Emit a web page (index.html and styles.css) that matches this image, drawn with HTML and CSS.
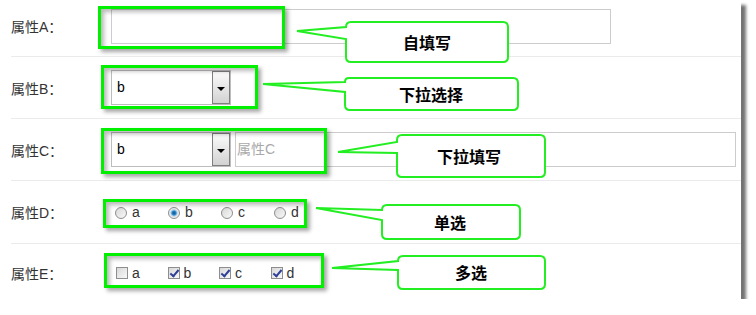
FILE: index.html
```html
<!DOCTYPE html>
<html lang="zh-CN">
<head>
    <meta charset="UTF-8">
    <meta name="viewport" content="width=device-width, initial-scale=1.0">
    <title>属性填写方式</title>
    <link rel="stylesheet" href="styles.css">
</head>
<body>

<div class="panel">
    <div class="row row-first">
        <span class="label">属性A：</span>
        <input class="text-input" type="text">
    </div>

    <div class="row">
        <span class="label">属性B：</span>
        <div class="select">
            <span class="select-value">b</span>
            <span class="select-btn"></span>
        </div>
    </div>

    <div class="row">
        <span class="label">属性C：</span>
        <div class="select">
            <span class="select-value">b</span>
            <span class="select-btn"></span>
        </div>
        <input class="text-input text-input-side" type="text" placeholder="属性C">
    </div>

    <div class="row row-radio">
        <span class="label">属性D：</span>
        <div class="options">
            <label class="option"><input type="radio" name="d">a</label>
            <label class="option"><input type="radio" name="d" checked>b</label>
            <label class="option"><input type="radio" name="d">c</label>
            <label class="option"><input type="radio" name="d">d</label>
        </div>
    </div>

    <div class="row row-last">
        <span class="label">属性E：</span>
        <div class="options options-check">
            <label class="option"><input type="checkbox">a</label>
            <label class="option"><input type="checkbox" checked>b</label>
            <label class="option"><input type="checkbox" checked>c</label>
            <label class="option"><input type="checkbox" checked>d</label>
        </div>
    </div>

    <!-- annotations drawn over the form -->
    <div class="mark mark-a"></div>
    <div class="mark mark-b"></div>
    <div class="mark mark-c"></div>
    <div class="mark mark-d"></div>
    <div class="mark mark-e"></div>

    <svg class="callouts" width="756" height="315" viewBox="0 0 756 315">
        <path d="M351,22 H503 Q508,22 508,27 V57 Q508,62 503,62 H351 Q346,62 346,57 V39 L297,31 L346,27 Q346,22 351,22 Z"/>
        <text x="427" y="42">自填写</text>

        <path d="M349,78 H513 Q518,78 518,83 V105 Q518,110 513,110 H350 Q345,110 345,105 V92 L263,84 L345,82 Q345,78 349,78 Z"/>
        <text x="431" y="94">下拉选择</text>

        <path d="M402,135 H540 Q545,135 545,140 V172 Q545,177 540,177 H402 Q397,177 397,172 V153 L338,152 L397,142 V140 Q397,135 402,135 Z"/>
        <text x="469" y="156">下拉填写</text>

        <path d="M387,205 H515 Q520,205 520,210 V234 Q520,239 515,239 H387 Q382,239 382,234 V220 L316,208 L382,210 Q382,205 387,205 Z"/>
        <text x="450" y="222">单选</text>

        <path d="M403,256 H540 Q545,256 545,261 V284 Q545,289 540,289 H403 Q398,289 398,284 V270 L332,268 L398,261 Q398,256 403,256 Z"/>
        <text x="471" y="272">多选</text>
    </svg>
</div>

</body>
</html>
```

FILE: styles.css
```css
body {
    margin: 0;
    background-color: #ffffff;
    font-family: "Liberation Sans", Arial, "Noto Sans CJK SC", sans-serif;
    font-size: 14px;
    color: #333333;
}
.panel {
    position: relative;
    width: 741px;
    height: 299px;
    background-color: #ffffff;
    box-shadow: 5px 5px 3px rgba(0, 0, 0, 0.55);
}
.row {
    box-sizing: border-box;
    display: flex;
    align-items: center;
    height: 62px;
    margin-left: 11px;
    border-bottom: 1px solid #ebebeb;
}
.row-first {
    height: 57px;
    padding-bottom: 4px;
}
.row-radio {
    height: 63px;
}
.row-last {
    height: 55px;
    padding-top: 3px;
    border-bottom: none;
}
.label {
    width: 100px;
    flex-shrink: 0;
    color: #333333;
}
.text-input {
    box-sizing: border-box;
    width: 500px;
    height: 35px;
    margin: 0;
    padding: 0 5px;
    border: 1px solid #cccccc;
    font-family: inherit;
    font-size: 14px;
    outline: none;
}
.text-input-side {
    width: 501px;
    height: 35px;
    margin-left: 4px;
    margin-top: -1px;
    padding: 0 1px;
}
.text-input::placeholder {
    color: #a9a9a9;
}
.select {
    box-sizing: border-box;
    display: flex;
    width: 120px;
    height: 35px;
    border: 1px solid #bdbdbd;
    background-color: #ffffff;
}
.select-value {
    flex: 1;
    padding-left: 5px;
    line-height: 33px;
    color: #000000;
}
.select-btn {
    box-sizing: border-box;
    position: relative;
    width: 18px;
    height: 33px;
    border: 1px solid #7f7f7f;
    background: linear-gradient(#fbfbfb, #d2d2d2);
}
.select-btn::after {
    content: "";
    position: absolute;
    left: 4px;
    top: 15px;
    border-left: 4px solid transparent;
    border-right: 4px solid transparent;
    border-top: 4px solid #000000;
}
.options {
    display: flex;
    padding-left: 4px;
}
.option {
    display: flex;
    align-items: center;
    width: 53px;
    color: #333333;
}
.options-check {
    padding-left: 5px;
}
.options-check .option {
    width: 51.5px;
}
.option input {
    appearance: none;
    -webkit-appearance: none;
    box-sizing: border-box;
    position: relative;
    width: 12px;
    height: 12px;
    margin: 0 5px 0 0;
    border: 1px solid #8e8e8e;
    background: linear-gradient(135deg, #d8d8d8, #f8f8f8);
}
.option input[type="radio"] {
    border-radius: 50%;
    margin-top: 2px;
}
.option input[type="radio"]:checked {
    background: radial-gradient(circle, #0c4f86 0, #2b88c8 2px, #9cc8e8 3px, #e8e8e8 4px, #f8f8f8 6px);
}
.option input[type="checkbox"] {
    margin-right: 4px;
    margin-top: -1px;
}
.option input[type="checkbox"]:checked::after {
    content: "";
    position: absolute;
    left: 3px;
    top: 0;
    width: 3px;
    height: 7px;
    border-right: 2px solid #2d3f96;
    border-bottom: 2px solid #2d3f96;
    transform: rotate(40deg);
}
.mark {
    position: absolute;
    box-sizing: border-box;
    border: 3px solid #00f000;
    box-shadow: 3px 3px 4px rgba(0, 0, 0, 0.35), inset 3px 3px 4px rgba(0, 0, 0, 0.28);
}
.mark-a {
    left: 98px;
    top: 6px;
    width: 187px;
    height: 43px;
}
.mark-b {
    left: 101px;
    top: 65px;
    width: 157px;
    height: 44px;
}
.mark-c {
    left: 101px;
    top: 128px;
    width: 226px;
    height: 46px;
}
.mark-d {
    left: 103px;
    top: 199px;
    width: 204px;
    height: 29px;
}
.mark-e {
    left: 104px;
    top: 253px;
    width: 220px;
    height: 35px;
}
.callouts {
    position: absolute;
    left: 0;
    top: 0;
    overflow: visible;
    pointer-events: none;
}
.callouts path {
    fill: #ffffff;
    stroke: #22ee22;
    stroke-width: 2;
    stroke-linejoin: miter;
}
.callouts text {
    font-family: "Noto Sans CJK SC", sans-serif;
    font-size: 16px;
    font-weight: bold;
    fill: #000000;
    text-anchor: middle;
    dominant-baseline: central;
}
```
